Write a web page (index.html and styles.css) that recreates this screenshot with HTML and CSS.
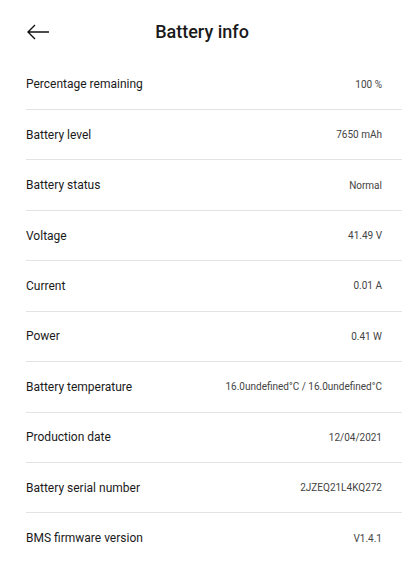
FILE: index.html
```html
<!DOCTYPE html>
<html lang="en">
<head>
    <meta charset="UTF-8">
    <title>Battery info</title>
    <link rel="stylesheet" href="styles.css">
</head>
<body>
    <div class="header">
        <svg class="back" width="24" height="16" viewBox="0 0 24 16">
            <path d="M23 8H2M9 1L2 8l7 7" fill="none" stroke="#111" stroke-width="1.4"/>
        </svg>
        <h1>Battery info</h1>
    </div>

    <div class="list">
        <div class="row"><span class="label">Percentage remaining</span><span class="value">100 %</span></div>
        <div class="row"><span class="label">Battery level</span><span class="value">7650 mAh</span></div>
        <div class="row"><span class="label">Battery status</span><span class="value">Normal</span></div>
        <div class="row"><span class="label">Voltage</span><span class="value">41.49 V</span></div>
        <div class="row"><span class="label">Current</span><span class="value">0.01 A</span></div>
        <div class="row"><span class="label">Power</span><span class="value">0.41 W</span></div>
        <div class="row"><span class="label">Battery temperature</span><span class="value">16.0undefined°C / 16.0undefined°C</span></div>
        <div class="row"><span class="label">Production date</span><span class="value">12/04/2021</span></div>
        <div class="row"><span class="label">Battery serial number</span><span class="value">2JZEQ21L4KQ272</span></div>
        <div class="row last"><span class="label">BMS firmware version</span><span class="value">V1.4.1</span></div>
    </div>
</body>
</html>
```

FILE: styles.css
```css
body {
    font-family: Roboto, "Liberation Sans", sans-serif;
    margin: 0;
    background-color: #fff;
    color: #1a1a1a;
}
.header {
    position: relative;
    height: 59.5px;
    display: flex;
    justify-content: center;
    align-items: flex-start;
}
.back {
    position: absolute;
    left: 26px;
    top: 24px;
}
h1 {
    margin: 20px 0 0 2px;
    font-size: 18px;
    font-weight: 500;
    line-height: 24px;
}
.list {
    margin-left: 26px;
}
.row {
    display: flex;
    justify-content: space-between;
    align-items: center;
    height: 49.44px;
    padding-right: 20px;
    border-bottom: 1px solid #e3e3e3;
}
.row.last {
    border-bottom: none;
}
.label {
    font-size: 12px;
}
.value {
    font-size: 10px;
    color: #444;
}
```
